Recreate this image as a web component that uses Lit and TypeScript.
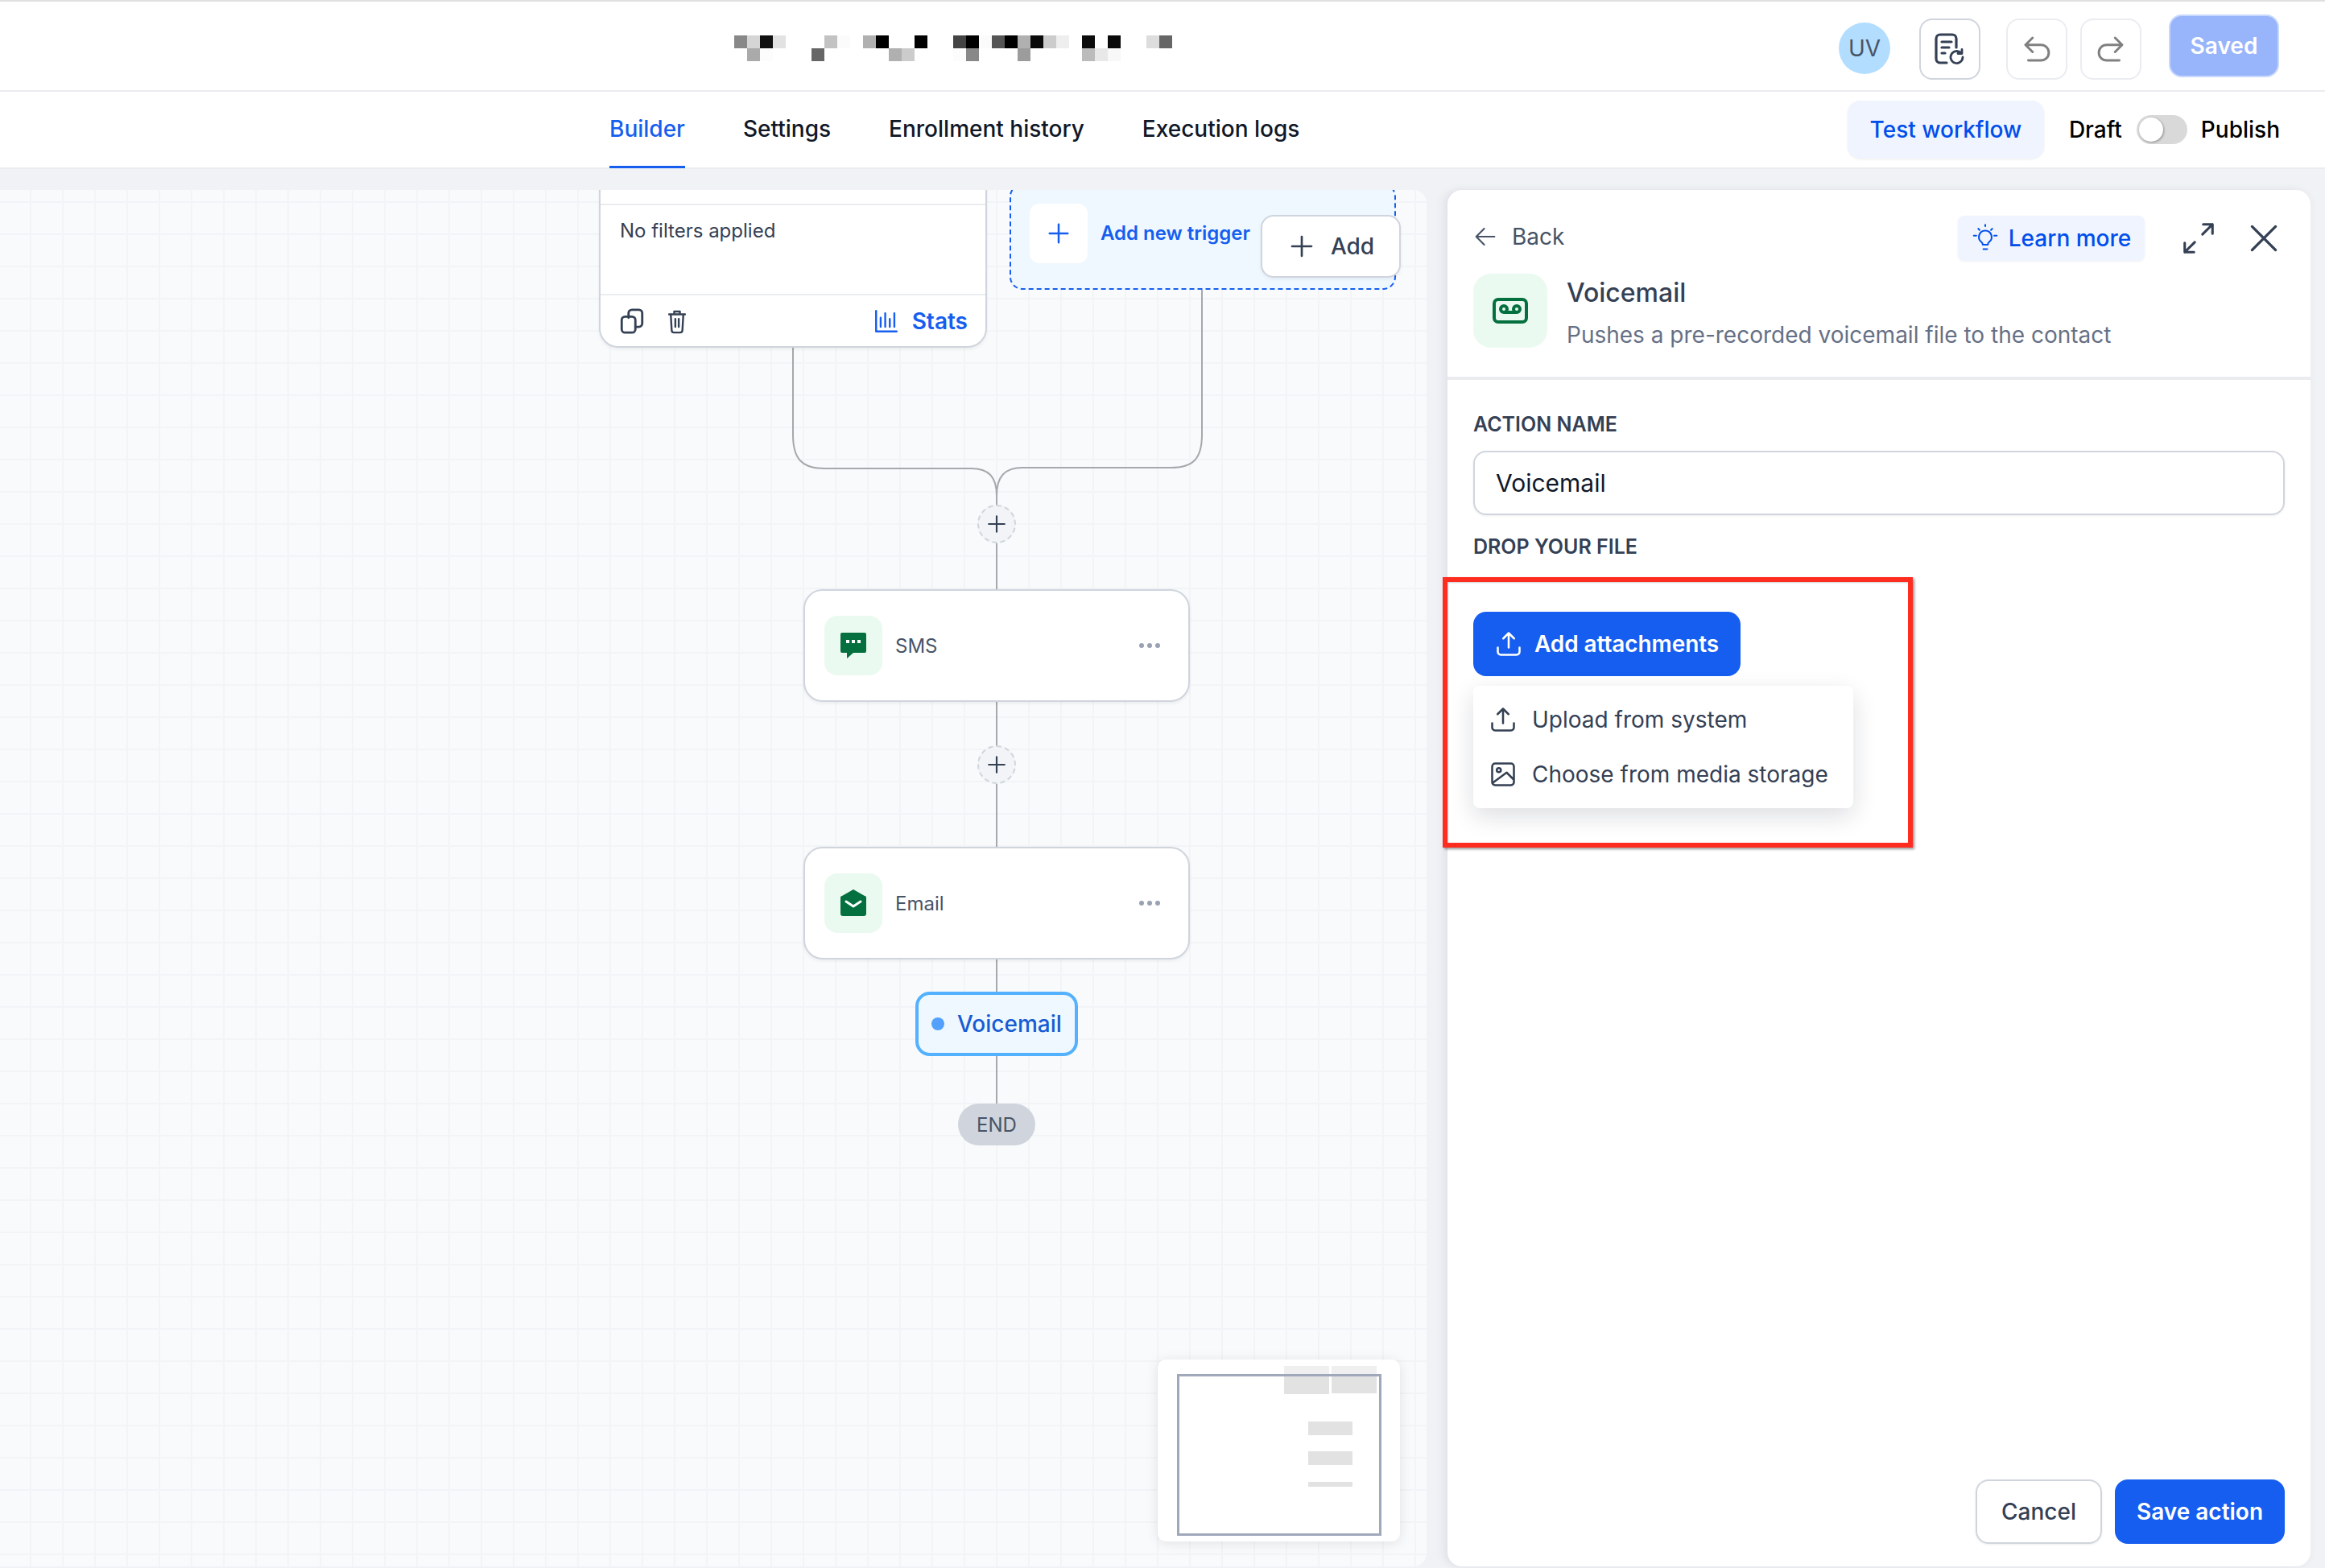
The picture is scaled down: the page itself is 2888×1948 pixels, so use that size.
import { LitElement, html, css, svg } from 'lit';
import { customElement } from 'lit/decorators.js';

// [column, row, grey value] cells of the censored workflow title
const TITLE_CELLS: [number, number, string][] = [
  [0, 0, '#888'], [1, 0, '#d5d5d5'], [2, 0, '#111'], [3, 0, '#e2e2e2'], [7, 0, '#c2c2c2'], [8, 0, '#fbfbfb'],
  [10, 0, '#b0b0b0'], [11, 0, '#000'], [14, 0, '#000'], [17, 0, '#444'], [18, 0, '#000'], [19, 0, '#fbfbfb'],
  [20, 0, '#555'], [21, 0, '#000'], [22, 0, '#b0b0b0'], [23, 0, '#0a0a0a'], [24, 0, '#ccc'], [25, 0, '#eee'],
  [27, 0, '#0c0c0c'], [29, 0, '#0a0a0a'], [32, 0, '#ddd'], [33, 0, '#666'],
  [1, 1, '#aaa'], [2, 1, '#fcfcfc'], [6, 1, '#666'], [12, 1, '#b0b0b0'], [13, 1, '#ccc'], [17, 1, '#fcfcfc'],
  [18, 1, '#888'], [22, 1, '#9c9c9c'], [27, 1, '#bbb'], [28, 1, '#e8e8e8'], [29, 1, '#f8f8f8'],
];

const icon = (size: number, body: unknown, cls = '') => html`
  <svg class=${cls} width=${size} height=${size} viewBox="0 0 24 24" fill="none" stroke="currentColor"
    stroke-width="2" stroke-linecap="round" stroke-linejoin="round">${body}</svg>
`;

const plusIcon = (size: number) => icon(size, svg`<path d="M12 3v18M3 12h18" />`);
const uploadIcon = (size: number) => icon(size, svg`<path d="M12 15V3M7.500 7.500 12 3l4.500 4.500M3 15v3.500A2.500 2.500 0 0 0 5.500 21h13a2.500 2.500 0 0 0 2.500-2.500V15" />`, 'thin');

@customElement('app-root')
export class AppRoot extends LitElement {
  static override styles = css`
    :host {
      display: block;
      width: 2888px;
      height: 1948px;
      overflow: hidden;
      background: #f0f2f6;
      font-family: Inter, "Liberation Sans", sans-serif;
      font-size: 28px;
      color: #101828;
    }
    svg { display: block; flex: none; }
    svg.thin { stroke-width: 1.7; }
    button { font: inherit; margin: 0; padding: 0; background: none; border: 0; }

    /* Top bar */
    .topbar {
      height: 114px;
      box-sizing: border-box;
      border-top: 2px solid #e0e0e0;
      border-bottom: 2px solid #eaecf0;
      background: #fff;
      display: flex;
      align-items: center;
      padding: 0 57px 0 912px;
    }
    .title {
      display: grid;
      grid-template-columns: repeat(34, 16px);
      grid-template-rows: repeat(2, 16px);
      margin-top: 6px;
    }
    .actions { margin-left: auto; display: flex; align-items: center; }
    .avatar {
      width: 64px;
      height: 64px;
      border-radius: 50%;
      background: #b2ddff;
      color: #475467;
      display: flex;
      align-items: center;
      justify-content: center;
      margin-right: 36px;
      margin-top: 6px;
    }
    .icon-btn {
      width: 76px;
      height: 76px;
      box-sizing: border-box;
      border: 2px solid #eaecf0;
      border-radius: 16px;
      display: flex;
      align-items: center;
      justify-content: center;
      color: #808080;
      margin-top: 8px;
    }
    .icon-btn.strong { border-color: #d0d5dd; color: #344054; margin-right: 32px; }
    .icon-btn.redo { margin-left: 16px; margin-right: 34px; }
    .saved {
      width: 137px;
      height: 78px;
      box-sizing: border-box;
      border: 2px solid #c7d7fe;
      border-radius: 16px;
      background: #98b4fa;
      color: #fff;
      font-weight: 600;
    }

    /* Tabs row */
    .tabbar {
      height: 96px;
      box-sizing: border-box;
      border-bottom: 2px solid #eaecf0;
      background: #fff;
      display: flex;
      padding: 0 56px 0 757px;
    }
    .tabs { display: flex; gap: 72px; }
    .tab {
      display: flex;
      align-items: center;
      font-weight: 500;
      border-bottom: 3px solid transparent;
      margin-bottom: -1px;
    }
    .tab.active { color: #155eef; border-bottom-color: #155eef; }
    .tab-actions { margin-left: auto; display: flex; align-items: center; font-weight: 500; }
    .test-btn {
      width: 244px;
      height: 72px;
      border-radius: 16px;
      background: #eff4ff;
      color: #004eeb;
      font-weight: 500;
      box-shadow: 0 1px 3px rgba(16, 24, 40, 0.08);
      margin-right: 31px;
    }
    .switch {
      width: 63px;
      height: 36px;
      border-radius: 18px;
      background: #d9d9d9;
      margin: 0 17px 0 18px;
      position: relative;
    }
    .switch::after {
      content: '';
      position: absolute;
      left: 3px;
      top: 3px;
      width: 30px;
      height: 30px;
      border-radius: 50%;
      background: #fff;
      box-shadow: 1px 1px 3px rgba(0, 0, 0, 0.35);
    }
    .publish { color: #000; }
    .draft { color: #000; }

    /* Main split */
    .main { display: flex; padding-top: 26px; height: 1710px; }

    .canvas {
      width: 1772px;
      height: 1710px;
      flex: none;
      position: relative;
      overflow: hidden;
      border-radius: 0 16px 16px 0;
      background-color: #f9fafb;
      background-image:
        linear-gradient(#f2f4f7 2px, transparent 2px),
        linear-gradient(90deg, #f2f4f7 2px, transparent 2px);
      background-size: 40px 40px;
      background-position: 37px 14px;
    }
    .wires { position: absolute; inset: 0; }

    .node {
      position: absolute;
      box-sizing: border-box;
      background: #fff;
      border: 2px solid #d0d5dd;
      box-shadow: 0 2px 4px rgba(16, 24, 40, 0.06);
    }
    .step {
      left: 998px;
      width: 480px;
      height: 140px;
      border-radius: 24px;
      display: flex;
      align-items: center;
      padding: 0 35px 0 24px;
      font-size: 24px;
      color: #475467;
    }
    .step.sms { top: 496px; }
    .step.email { top: 816px; }
    .tile {
      width: 72px;
      height: 74px;
      border-radius: 16px;
      background: #ebfaf0;
      color: #05703f;
      display: flex;
      align-items: center;
      justify-content: center;
      margin-right: 16px;
    }
    .more { margin-left: auto; display: flex; gap: 4px; }
    .more i { width: 6px; height: 6px; border-radius: 50%; background: #98a2b3; }

    .add-dot {
      position: absolute;
      left: 1214px;
      width: 48px;
      height: 48px;
      box-sizing: border-box;
      border: 2px dashed #d0d5dd;
      border-radius: 50%;
      background: #f2f4f7;
      color: #344054;
      display: flex;
      align-items: center;
      justify-content: center;
    }
    .add-dot.first { top: 391px; }
    .add-dot.second { top: 690px; }

    .trigger-card {
      left: 744px;
      top: -36px;
      width: 482px;
      height: 232px;
      border-radius: 24px;
      display: flex;
      flex-direction: column;
    }
    .card-head { height: 51px; flex: none; border-bottom: 2px solid #eaecf0; }
    .card-body {
      height: 112px;
      flex: none;
      box-sizing: border-box;
      border-bottom: 2px solid #eaecf0;
      padding: 16px 24px;
      font-size: 24px;
      line-height: 32px;
      color: #344054;
    }
    .card-foot {
      flex: 1;
      display: flex;
      align-items: center;
      padding: 0 22px;
      color: #344054;
      gap: 22px;
    }
    .stats {
      margin-left: auto;
      display: flex;
      align-items: center;
      gap: 15px;
      font-weight: 600;
      color: #155eef;
    }
    .new-trigger {
      position: absolute;
      left: 1254px;
      top: -8px;
      width: 480px;
      height: 132px;
      box-sizing: border-box;
      background: #eff8ff;
      border: 2px dashed #155eef;
      border-radius: 16px;
      display: flex;
      align-items: flex-start;
      padding: 23px 0 0 23px;
      font-size: 24px;
      font-weight: 600;
      color: #155eef;
    }
    .plus-tile {
      width: 72px;
      height: 74px;
      border-radius: 12px;
      background: #fff;
      display: flex;
      align-items: center;
      justify-content: center;
      margin-right: 16px;
    }
    .trigger-label { line-height: 74px; }
    .add-btn {
      position: absolute;
      left: 1566px;
      top: 31px;
      width: 174px;
      height: 78px;
      box-sizing: border-box;
      background: #fff;
      border: 2px solid #d0d5dd;
      border-radius: 16px;
      box-shadow: 0 2px 4px rgba(16, 24, 40, 0.06);
      display: flex;
      align-items: center;
      justify-content: center;
      gap: 20px;
      padding-left: 2px;
      font-weight: 500;
      color: #344054;
    }
    .current {
      left: 1137px;
      top: 996px;
      width: 202px;
      height: 80px;
      border: 4px solid #53b1fd;
      border-radius: 18px;
      background: #eff8ff;
      box-shadow: none;
      display: flex;
      align-items: center;
      padding-left: 16px;
      gap: 16px;
      font-weight: 500;
      color: #175cd3;
    }
    .current i { width: 16px; height: 16px; border-radius: 50%; background: #53a1fd; }
    .end {
      position: absolute;
      left: 1190px;
      top: 1135px;
      width: 96px;
      height: 52px;
      border-radius: 26px;
      background: #d0d5dd;
      color: #475467;
      font-size: 24px;
      display: flex;
      align-items: center;
      justify-content: center;
    }
    .minimap {
      position: absolute;
      left: 1438px;
      top: 1453px;
      width: 301px;
      height: 226px;
      border-radius: 10px;
      background: #fff;
      box-shadow: 0 2px 16px rgba(16, 24, 40, 0.1);
    }

    /* Right panel */
    .panel {
      width: 1072px;
      height: 1710px;
      margin-left: 26px;
      flex: none;
      position: relative;
      box-sizing: border-box;
      background: #fff;
      border-radius: 18px;
      display: flex;
      flex-direction: column;
      box-shadow: -8px 0 12px rgba(16, 24, 40, 0.04), 0 0 10px rgba(16, 24, 40, 0.05);
    }
    .panel-head {
      height: 236px;
      box-sizing: border-box;
      border-bottom: 4px solid #eaecf0;
      padding: 32px 33px 0 32px;
      flex: none;
    }
    .head-row { display: flex; align-items: center; height: 56px; }
    .back {
      display: flex;
      align-items: center;
      gap: 16px;
      color: #475467;
      margin: -4px 0 0 -2px;
    }
    .back svg { stroke-width: 1.5; }
    .learn {
      margin-left: auto;
      width: 232px;
      height: 56px;
      border-radius: 8px;
      background: #eff4ff;
      color: #004eeb;
      font-weight: 500;
      display: flex;
      align-items: center;
      justify-content: center;
      gap: 10px;
      padding-right: 2px;
      box-shadow: 0 1px 3px rgba(16, 24, 40, 0.06);
    }
    .learn svg { stroke-width: 1.3; }
    .expand { margin-left: 44px; color: #344054; }
    .expand svg { stroke-width: 1.6; }
    .close { margin-left: 33px; color: #344054; }
    .close svg { stroke-width: 1.6; }
    .title-row { display: flex; margin-top: 16px; gap: 24px; }
    .title-row .tile { width: 92px; height: 92px; border-radius: 22px; margin: 0; }
    .name { font-size: 32px; font-weight: 500; line-height: 44px; padding-top: 2px; color: #344054; }
    .desc { font-size: 28px; line-height: 36px; margin-top: 12px; color: #667085; }

    .panel-body {
      flex: 1;
      display: flex;
      flex-direction: column;
      align-items: flex-start;
      padding: 39px 32px 28px 32px;
    }
    .label { font-size: 25px; line-height: 32px; font-weight: 600; color: #344054; }
    .input {
      align-self: stretch;
      height: 80px;
      box-sizing: border-box;
      margin-top: 17px;
      margin-bottom: 23px;
      border: 2px solid #d0d5dd;
      border-radius: 16px;
      padding: 0 26px;
      display: flex;
      align-items: center;
      font-size: 30px;
      color: #101828;
      box-shadow: 0 1px 3px rgba(16, 24, 40, 0.08);
    }
    .attach {
      margin-top: 65px;
      width: 332px;
      height: 80px;
      border-radius: 16px;
      background: #155eef;
      color: #fff;
      font-weight: 600;
      letter-spacing: -0.1px;
      display: flex;
      align-items: center;
      padding-left: 26px;
      gap: 14px;
    }
    .menu {
      margin-top: 12px;
      width: 472px;
      box-sizing: border-box;
      padding: 8px 0;
      border-radius: 8px;
      background: #fff;
      box-shadow: 0 10px 30px rgba(16, 24, 40, 0.14);
      color: #344054;
    }
    .menu-item { height: 68px; display: flex; align-items: center; padding-left: 19px; gap: 18px; }
    .annotation {
      position: absolute;
      left: -6px;
      top: 481px;
      width: 584px;
      height: 336px;
      box-sizing: border-box;
      border: 6px solid #ff2d20;
      box-shadow: 2px 2px 3px rgba(0, 0, 0, 0.4), inset 1px 1px 2px rgba(0, 0, 0, 0.2);
      pointer-events: none;
    }
    .panel-foot { margin-top: auto; align-self: stretch; display: flex; justify-content: flex-end; gap: 16px; }
    .cancel, .save {
      height: 80px;
      box-sizing: border-box;
      border-radius: 16px;
      font-weight: 500;
    }
    .cancel { width: 157px; border: 2px solid #d0d5dd; color: #344054; box-shadow: 0 1px 3px rgba(16, 24, 40, 0.08); }
    .save { width: 211px; background: #155eef; color: #fff; font-weight: 600; }
  `;

  private renderTitle() {
    return html`
      <div class="title">
        ${TITLE_CELLS.map(
          ([c, r, grey]) => html`<span style="grid-column:${c + 1};grid-row:${r + 1};background:${grey}"></span>`,
        )}
      </div>
    `;
  }

  private renderWires() {
    // canvas starts at y=236 in the page, the viewBox keeps page coordinates
    return html`
      <svg class="wires" width="1772" height="1710" viewBox="0 236 1772 1710" fill="none" stroke="#a6a8ad" stroke-width="2">
        <path d="M985 432V540C985 570 996 582 1024 582H1206C1228 582 1238 592 1238 616" />
        <path d="M1493 360V540C1493 570 1482 581 1454 581H1270C1248 581 1238 592 1238 616" />
        <path d="M1238 610V732M1238 872V1052M1238 1192V1232M1238 1312V1371" />
      </svg>
    `;
  }

  private renderStep(cls: string, label: string, glyph: unknown) {
    return html`
      <div class="node step ${cls}">
        <div class="tile">${glyph}</div>
        <span>${label}</span>
        <div class="more"><i></i><i></i><i></i></div>
      </div>
    `;
  }

  private renderCanvas() {
    const smsGlyph = html`
      <svg width="34" height="34" viewBox="0 0 34 34">
        <path fill="currentColor" d="M3 1h28a2 2 0 0 1 2 2v21a2 2 0 0 1-2 2H17l-8 7v-7H3a2 2 0 0 1-2-2V3a2 2 0 0 1 2-2z" />
        <path fill="#fff" d="M8 10h4v4H8zM15 10h4v4h-4zM22 10h4v4h-4z" />
      </svg>
    `;
    const mailGlyph = html`
      <svg width="34" height="34" viewBox="0 0 34 34">
        <path fill="currentColor" d="M17 0 31 8a2 2 0 0 1 2 2v20a3 3 0 0 1-3 3H4a3 3 0 0 1-3-3V10a2 2 0 0 1 2-2z" />
        <path fill="none" stroke="#fff" stroke-width="3" stroke-linecap="round" stroke-linejoin="round" d="M8 15l9 6 9-6" />
      </svg>
    `;
    return html`
      <div class="canvas">
        ${this.renderWires()}
        <div class="node trigger-card">
          <div class="card-head"></div>
          <div class="card-body">No filters applied</div>
          <div class="card-foot">
            ${icon(34, svg`<path d="M9 9V5a3 3 0 0 1 3-3h6a3 3 0 0 1 3 3v9a3 3 0 0 1-3 3h-3" /><rect x="3" y="8" width="12" height="14" rx="3" />`)}
            ${icon(34, svg`<path d="M5 6h14M9.500 6V3.500h5V6M6.500 6l.8 14a2 2 0 0 0 2 2h5.400a2 2 0 0 0 2-2l.8-14M10.500 10v7M13.500 10v7" />`, 'thin')}
            <span class="stats">
              ${icon(34, svg`<path d="M3 3v18h18M7 9v8M11 5v12M15 10v7M19 5v12" />`, 'thin')}Stats
            </span>
          </div>
        </div>
        <div class="new-trigger">
          <div class="plus-tile">${plusIcon(30)}</div>
          <span class="trigger-label">Add new trigger</span>
        </div>
        <div class="add-btn">${plusIcon(32)}<span>Add</span></div>
        <div class="add-dot first">${plusIcon(26)}</div>
        ${this.renderStep('sms', 'SMS', smsGlyph)}
        <div class="add-dot second">${plusIcon(26)}</div>
        ${this.renderStep('email', 'Email', mailGlyph)}
        <div class="node current"><i></i><span>Voicemail</span></div>
        <div class="end">END</div>
        <div class="minimap">
          <svg width="301" height="226" viewBox="1438 1689 301 226">
            <path fill="#efefef" d="M1595 1697h56v10h-56zM1654 1697h56v10h-56z" />
            <path fill="#e2e2e2" d="M1595 1707h56v25h-56zM1654 1707h56v24h-56zM1625 1766h55v17h-55zM1625 1803h55v17h-55zM1625 1841h55v6h-55z" />
            <rect x="1463.500" y="1708.500" width="251" height="198" fill="none" stroke="#a0a8bc" stroke-width="3" />
          </svg>
        </div>
      </div>
    `;
  }

  private renderPanel() {
    return html`
      <div class="panel">
        <div class="panel-head">
          <div class="head-row">
            <div class="back">
              ${icon(34, svg`<path d="M20 12H4M11 5l-7 7 7 7" />`)}
              <span>Back</span>
            </div>
            <button class="learn">
              ${icon(38, svg`<path d="M12 6a5 5 0 0 0-3 9c.600.500 1 1.200 1 2h4c0-.800.400-1.500 1-2a5 5 0 0 0-3-9zM10.500 20.500h3M12 1.500v1M5 10H3M21 10h-2M6.500 4.500l1 1M17.500 4.500l-1 1" />`)}
              <span>Learn more</span>
            </button>
            <div class="expand">
              ${icon(46, svg`<path d="M14.500 9.500 21 3M15 3h6v6M9.500 14.500 3 21M3 15v6h6" />`)}
            </div>
            <div class="close">
              ${icon(50, svg`<path d="M5 5l14 14M19 5 5 19" />`)}
            </div>
          </div>
          <div class="title-row">
            <div class="tile">
              <svg width="44" height="32" viewBox="0 0 44 32" fill="none" stroke="currentColor" stroke-width="4">
                <rect x="2" y="2" width="40" height="28" rx="5" />
                <circle cx="14" cy="14" r="4" />
                <circle cx="30" cy="14" r="4" />
                <path d="M14 18h16" />
              </svg>
            </div>
            <div>
              <div class="name">Voicemail</div>
              <div class="desc">Pushes a pre-recorded voicemail file to the contact</div>
            </div>
          </div>
        </div>
        <div class="panel-body">
          <div class="label">ACTION NAME</div>
          <div class="input">Voicemail</div>
          <div class="label">DROP YOUR FILE</div>
          <button class="attach">${uploadIcon(36)}<span>Add attachments</span></button>
          <div class="menu">
            <div class="menu-item">${uploadIcon(36)}<span>Upload from system</span></div>
            <div class="menu-item">
              ${icon(36, svg`<rect x="3" y="3" width="18" height="18" rx="2.500" /><circle cx="8.500" cy="8.500" r="1.700" /><path d="M3.500 19 15 10.500l5.500 5.500" />`, 'thin')}
              <span>Choose from media storage</span>
            </div>
          </div>
          <div class="panel-foot">
            <button class="cancel">Cancel</button>
            <button class="save">Save action</button>
          </div>
        </div>
        <div class="annotation"></div>
      </div>
    `;
  }

  override render() {
    return html`
      <div class="topbar">
        ${this.renderTitle()}
        <div class="actions">
          <div class="avatar">UV</div>
          <div class="icon-btn strong">
            <svg width="38" height="40" viewBox="0 0 38 40" fill="none" stroke="currentColor" stroke-width="3.200" stroke-linecap="round" stroke-linejoin="round">
              <path d="M15 37H7a5 5 0 0 1-5-5V7a5 5 0 0 1 5-5h15a5 5 0 0 1 5 5v11M9 11h12M9 18h9M9 25h4" />
              <path stroke-width="2.800" d="M35 30a7.500 7.500 0 1 1-2.300-5.400M34 20.500v5h-5" />
            </svg>
          </div>
          <div class="icon-btn">${icon(42, svg`<path d="M9 14 4 9l5-5M4 9h11a5 5 0 0 1 0 11H6" />`, 'thin')}</div>
          <div class="icon-btn redo">${icon(42, svg`<path d="m15 14 5-5-5-5M20 9H9a5 5 0 0 0 0 11h9" />`, 'thin')}</div>
          <button class="saved">Saved</button>
        </div>
      </div>
      <div class="tabbar">
        <div class="tabs">
          <div class="tab active">Builder</div>
          <div class="tab">Settings</div>
          <div class="tab">Enrollment history</div>
          <div class="tab">Execution logs</div>
        </div>
        <div class="tab-actions">
          <button class="test-btn">Test workflow</button>
          <span class="draft">Draft</span>
          <div class="switch"></div>
          <span class="publish">Publish</span>
        </div>
      </div>
      <div class="main">
        ${this.renderCanvas()}
        ${this.renderPanel()}
      </div>
    `;
  }
}
